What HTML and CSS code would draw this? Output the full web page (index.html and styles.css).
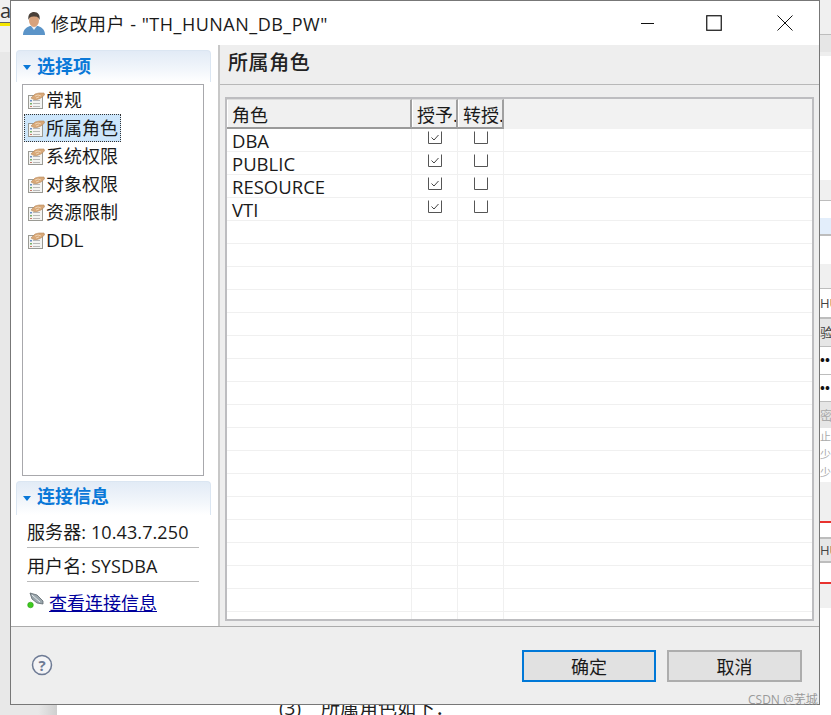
FILE: index.html
```html
<!DOCTYPE html>
<html lang="zh-CN">
<head>
<meta charset="utf-8">
<title>修改用户</title>
<link rel="stylesheet" href="styles.css">
</head>
<body>
<svg class="defs" width="0" height="0" aria-hidden="true">
  <symbol id="page" viewBox="0 0 17 17">
    <rect x="0.5" y="3.5" width="14" height="13" fill="#f4f4f2" stroke="#9a9a94"/>
    <rect x="2" y="8" width="2" height="1.5" fill="#6c8fc4"/><rect x="5" y="8" width="7" height="1" fill="#b8b8b8"/>
    <rect x="2" y="11" width="2" height="1.5" fill="#7ab06a"/><rect x="5" y="11" width="7" height="1" fill="#b8b8b8"/>
    <rect x="2" y="14" width="2" height="1" fill="#c47a6c"/><rect x="5" y="14" width="7" height="1" fill="#b8b8b8"/>
    <path d="M3 6 L7 2 L11 1 L16 1 L16.500 3 L13 6 L9 7.500 L6 7.500 Z" fill="#d8a878" stroke="#b98a5c" stroke-width=".6"/>
    <path d="M7 4 L10 3 L13 4 M8 6 L11 5" fill="none" stroke="#f4dcc0" stroke-width=".8"/>
  </symbol>
  <symbol id="chk" viewBox="0 0 14 13">
    <path d="M.5 .5V12.500H13.500V.5" fill="#fff" stroke="#555" stroke-width="1"/>
    <path d="M3.500 6.500L6 9L10.500 4" fill="none" stroke="#444" stroke-width="1"/>
  </symbol>
  <symbol id="unchk" viewBox="0 0 14 13">
    <path d="M.5 .5V12.500H13.500V.5" fill="#fff" stroke="#555" stroke-width="1"/>
  </symbol>
</svg>

<div class="desk">
  <div class="desk-left">
    <div class="desk-left-top"><span class="desk-a">a</span><span class="desk-mark"></span></div>
  </div>
  <div class="desk-right">
    <div class="s s34 grey"></div>
    <div class="s s1 rule"></div>
    <div class="s s17 darker"></div>
    <div class="s s4 pale"></div>
    <div class="s s124"></div>
    <div class="s s20 grey"></div>
    <div class="s s1 rule"></div>
    <div class="s s17"></div>
    <div class="s s16 blue"></div>
    <div class="s s2 rule"></div>
    <div class="s s28"></div>
    <div class="s s24 grey"></div>
    <div class="s s1 rule"></div>
    <div class="s s28 txt">HU</div>
    <div class="s s2 rule"></div>
    <div class="s s27 txt darker">验</div>
    <div class="s s1 rule"></div>
    <div class="s s27 txt bold">••</div>
    <div class="s s1 rule"></div>
    <div class="s s26 txt bold">••</div>
    <div class="s s1 rule"></div>
    <div class="s s26 txt darker faint">密</div>
    <div class="s s18 txt faint small">止</div>
    <div class="s s18 txt faint small">少</div>
    <div class="s s18 txt faint small">少</div>
    <div class="s s39 grey"></div>
    <div class="s s2 red"></div>
    <div class="s s14"></div>
    <div class="s s2 rule"></div>
    <div class="s s22 txt darker">HU</div>
    <div class="s s2 rule"></div>
    <div class="s s19"></div>
    <div class="s s2 red"></div>
    <div class="s s24 grey"></div>
  </div>
  <div class="desk-shade"></div>
  <p class="desk-text">(3)<span class="desk-gap"></span>所属角色如下：</p>
</div>

<div class="window">
  <header class="titlebar">
    <svg class="user-icon" width="24" height="24" viewBox="0 0 24 24" aria-hidden="true">
      <path d="M1 24 C1 18 5 16 8 15 L16 15 C19 16 23 18 23 24 Z" fill="#5b94c8"/>
      <path d="M9 15 L12 19 L15 15 Z" fill="#e8eef4"/>
      <ellipse cx="12" cy="9.500" rx="5" ry="6.500" fill="#d8a27c"/>
      <path d="M6.500 9 C5.500 3 9 1 12 1 C16 1 18.500 4 17.500 9 C16.500 6 15 5.500 12 5.500 C9 5.500 7.500 6 6.500 9 Z" fill="#4a4038"/>
    </svg>
    <h1 class="title">修改用户 - "TH_HUNAN_DB_PW"</h1>
    <div class="controls">
      <svg class="ctl ctl-min" width="14" height="16" viewBox="0 0 14 16" aria-hidden="true"><path d="M1 8.500H14" stroke="#111" stroke-width="1"/></svg>
      <svg class="ctl ctl-max" width="16" height="16" viewBox="0 0 16 16" aria-hidden="true"><rect x=".75" y=".75" width="14.500" height="14.500" fill="none" stroke="#111" stroke-width="1.200"/></svg>
      <svg class="ctl ctl-close" width="16" height="16" viewBox="0 0 16 16" aria-hidden="true"><path d="M.5 .5L15.500 15.500M15.500 .5L.5 15.500" stroke="#111" stroke-width="1"/></svg>
    </div>
  </header>

  <main class="main">
    <aside class="side">
      <div class="section-head"><span class="tri"></span>选择项</div>
      <ul class="nav">
        <li class="nav-item"><svg class="nav-icon"><use href="#page"/></svg><span class="nav-label">常规</span></li>
        <li class="nav-item on"><svg class="nav-icon"><use href="#page"/></svg><span class="nav-label">所属角色</span></li>
        <li class="nav-item"><svg class="nav-icon"><use href="#page"/></svg><span class="nav-label">系统权限</span></li>
        <li class="nav-item"><svg class="nav-icon"><use href="#page"/></svg><span class="nav-label">对象权限</span></li>
        <li class="nav-item"><svg class="nav-icon"><use href="#page"/></svg><span class="nav-label">资源限制</span></li>
        <li class="nav-item"><svg class="nav-icon"><use href="#page"/></svg><span class="nav-label latin">DDL</span></li>
      </ul>
      <div class="section-head second"><span class="tri"></span>连接信息</div>
      <div class="info">
        <div class="info-row">服务器: 10.43.7.250</div>
        <div class="info-row">用户名: SYSDBA</div>
        <div class="info-link">
          <svg width="20" height="20" viewBox="0 0 20 20" aria-hidden="true">
            <path d="M3 1 L10 3 L16 9 L16 12 L10 11 L5 7 Z" fill="#9aa6ac" stroke="#5e686e" stroke-width=".8"/>
            <path d="M5 3 L13 10" stroke="#e6ecef" stroke-width="1"/>
            <circle cx="3.500" cy="13" r="2.800" fill="#3ecb1e" stroke="#2a9a14" stroke-width=".6"/>
          </svg>
          <a class="link" href="#">查看连接信息</a>
        </div>
      </div>
    </aside>

    <section class="pane">
      <h2 class="pane-title">所属角色</h2>
      <div class="pane-body">
        <div class="grid">
          <div class="grid-head">
            <div class="hcell c1">角色</div>
            <div class="hcell c2">授予.</div>
            <div class="hcell c3">转授.</div>
          </div>
          <div class="grid-rows">
            <div class="row"><div class="cell c1">DBA</div><div class="cell c2"><svg class="box"><use href="#chk"/></svg></div><div class="cell c3"><svg class="box"><use href="#unchk"/></svg></div></div>
            <div class="row"><div class="cell c1">PUBLIC</div><div class="cell c2"><svg class="box"><use href="#chk"/></svg></div><div class="cell c3"><svg class="box"><use href="#unchk"/></svg></div></div>
            <div class="row"><div class="cell c1">RESOURCE</div><div class="cell c2"><svg class="box"><use href="#chk"/></svg></div><div class="cell c3"><svg class="box"><use href="#unchk"/></svg></div></div>
            <div class="row"><div class="cell c1">VTI</div><div class="cell c2"><svg class="box"><use href="#chk"/></svg></div><div class="cell c3"><svg class="box"><use href="#unchk"/></svg></div></div>
            <div class="row"><div class="cell c1"></div><div class="cell c2"></div><div class="cell c3"></div></div>
            <div class="row"><div class="cell c1"></div><div class="cell c2"></div><div class="cell c3"></div></div>
            <div class="row"><div class="cell c1"></div><div class="cell c2"></div><div class="cell c3"></div></div>
            <div class="row"><div class="cell c1"></div><div class="cell c2"></div><div class="cell c3"></div></div>
            <div class="row"><div class="cell c1"></div><div class="cell c2"></div><div class="cell c3"></div></div>
            <div class="row"><div class="cell c1"></div><div class="cell c2"></div><div class="cell c3"></div></div>
            <div class="row"><div class="cell c1"></div><div class="cell c2"></div><div class="cell c3"></div></div>
            <div class="row"><div class="cell c1"></div><div class="cell c2"></div><div class="cell c3"></div></div>
            <div class="row"><div class="cell c1"></div><div class="cell c2"></div><div class="cell c3"></div></div>
            <div class="row"><div class="cell c1"></div><div class="cell c2"></div><div class="cell c3"></div></div>
            <div class="row"><div class="cell c1"></div><div class="cell c2"></div><div class="cell c3"></div></div>
            <div class="row"><div class="cell c1"></div><div class="cell c2"></div><div class="cell c3"></div></div>
            <div class="row"><div class="cell c1"></div><div class="cell c2"></div><div class="cell c3"></div></div>
            <div class="row"><div class="cell c1"></div><div class="cell c2"></div><div class="cell c3"></div></div>
            <div class="row"><div class="cell c1"></div><div class="cell c2"></div><div class="cell c3"></div></div>
            <div class="row"><div class="cell c1"></div><div class="cell c2"></div><div class="cell c3"></div></div>
            <div class="row"><div class="cell c1"></div><div class="cell c2"></div><div class="cell c3"></div></div>
            <div class="row"><div class="cell c1"></div><div class="cell c2"></div><div class="cell c3"></div></div>
          </div>
        </div>
      </div>
    </section>
  </main>

  <footer class="footer">
    <svg class="help" width="22" height="22" viewBox="0 0 22 22" aria-hidden="true">
      <circle cx="11" cy="11" r="9.500" fill="#f4f4f6" stroke="#6d7a94" stroke-width="1.500"/>
      <text x="11" y="16.500" text-anchor="middle" class="help-q">?</text>
    </svg>
    <div class="buttons">
      <button class="btn primary">确定</button>
      <button class="btn">取消</button>
    </div>
  </footer>
</div>
<div class="watermark">CSDN @芜城</div>
</body>
</html>
```
FILE: styles.css
```css
* { box-sizing: border-box; }
html, body { margin: 0; padding: 0; }
body {
  position: relative;
  width: 831px;
  height: 715px;
  overflow: hidden;
  background: #fff;
  font-family: "Open Sans", "Noto Sans CJK SC", sans-serif;
  font-size: 18px;
  color: #1a1a1a;
}
.defs { position: absolute; }

/* Desktop behind the dialog */
.desk { position: absolute; inset: 0; }
.desk-left { position: absolute; left: 0; top: 0; width: 10px; height: 715px; background: #e8e8e8; }
.desk-left-top { height: 52px; background: #f0f0f0; display: flex; flex-direction: column; overflow: hidden; }
.desk-a { font: 20px/22px "Open Sans", sans-serif; height: 22px; color: #333; }
.desk-mark { height: 4px; background: #f5e600; border-top: 1px solid #666; }
.desk-right { position: absolute; left: 820px; top: 0; width: 11px; height: 715px; display: flex; flex-direction: column; overflow: hidden; }
.desk-shade { position: absolute; left: 10px; top: 700px; width: 47px; height: 15px; background: linear-gradient(90deg, #e8e8e8 60%, #cfcfcf); }
.desk-text { position: absolute; left: 279px; top: 696px; margin: 0; font-size: 19px; line-height: 24px; color: #222; white-space: nowrap; display: flex; }
.desk-gap { width: 20px; flex: none; }

.s { flex: none; overflow: hidden; white-space: nowrap; font-size: 13px; color: #444; line-height: 1.4; }
.s1 { height: 1px; } .s2 { height: 2px; } .s4 { height: 4px; } .s14 { height: 14px; } .s16 { height: 16px; } .s17 { height: 17px; } .s18 { height: 18px; } .s19 { height: 19px; }
.s20 { height: 20px; } .s22 { height: 22px; } .s24 { height: 24px; } .s26 { height: 26px; } .s27 { height: 27px; } .s28 { height: 28px; } .s34 { height: 34px; } .s39 { height: 39px; } .s124 { height: 124px; }
.grey { background: #f0f0f0; }
.darker { background: #e6e6e6; }
.pale { background: #eeeeee; }
.blue { background: #e3eefb; }
.rule { background: #bdbdbd; }
.red { background: #e8322e; }
.txt { display: flex; align-items: center; }
.bold { color: #111; font-size: 13px; font-weight: 700; }
.faint { color: #aaa; }
.small { font-size: 11px; }

/* Dialog */
.window {
  position: absolute;
  left: 10px;
  top: 0;
  width: 810px;
  height: 705px;
  border: 1px solid #777;
  background: #fff;
  display: flex;
  flex-direction: column;
}
.titlebar { height: 44px; flex: none; display: flex; align-items: center; padding-left: 11px; background: #fff; }
.user-icon { flex: none; margin-right: 5px; }
.title { margin: 0; font-size: 18px; font-weight: 400; letter-spacing: .5px; color: #1a1a1a; white-space: nowrap; }
.controls { margin-left: auto; display: flex; align-items: center; padding-right: 26px; }
.ctl { display: block; }
.ctl-min { margin-right: 52px; }
.ctl-max { margin-right: 55px; }

.main { height: 581px; flex: none; display: flex; background: #eee; }
.side { width: 207px; flex: none; background: #fff; padding: 5px 7px 0 5px; display: flex; flex-direction: column; }
.section-head {
  height: 32px;
  flex: none;
  display: flex;
  align-items: center;
  padding: 0 0 4px 20px;
  position: relative;
  font-size: 18px;
  font-weight: 700;
  color: #0a78d8;
  border: 1px solid #dbe6f2;
  border-bottom: 0;
  border-radius: 4px 4px 0 0;
  background: linear-gradient(180deg, #e2ebf6 0%, #f2f6fb 60%, #fff 100%);
}
.second { height: 34px; margin-top: 5px; padding-bottom: 7px; }
.tri { position: absolute; left: 6px; top: 14px; border: 4px solid transparent; border-top: 5px solid #0a78d8; border-bottom: 0; }
.nav {
  list-style: none;
  margin: 2px 7px 0 6px;
  padding: 1px 1px 3px;
  height: 392px;
  flex: none;
  border: 1.500px solid #a8a8ac;
  background: #fff;
}
.nav-item { height: 28px; display: flex; align-items: center; padding-left: 4px; }
.nav-icon { width: 17px; height: 17px; flex: none; margin-right: 1px; }
.nav-label { padding: 0; line-height: 28px; white-space: nowrap; }
.latin { font-size: 19px; }
.nav-item.on { width: 97px; background: #cde6fb; outline: 1px dotted #333; outline-offset: -1px; }
.info { padding: 0 12px 0 11px; margin-top: -1px; }
.info-row { height: 34px; display: flex; align-items: center; border-bottom: 1.500px solid #bbb; white-space: nowrap; letter-spacing: .1px; }
.info-link { display: flex; align-items: center; height: 39px; }
.link { color: #00009c; margin-left: 2px; text-decoration: underline; letter-spacing: 0; }

.pane { flex: 1; min-width: 0; border-left: 2px solid #c8c8c8; display: flex; flex-direction: column; }
.pane-title { margin: 0; height: 40px; flex: none; padding: 0 0 6px 8px; display: flex; align-items: center; font-size: 20px; font-weight: 500; letter-spacing: .6px; color: #222; border-bottom: 1.500px solid #b8b8b8; }
.pane-body { flex: 1; min-height: 0; padding: 12px 5px 5px 5px; }
.grid { height: 100%; border: 2px solid #bdbdc0; background: #fff; overflow: hidden; display: flex; flex-direction: column; }
.grid-head { height: 30px; flex: none; display: flex; background: #f2f2f2; }
.hcell { height: 30px; background: #f0f0f0; border-right: 2px solid #a0a0a0; border-bottom: 2px solid #9a9a9a; border-top: 1px solid #ddd; display: flex; align-items: center; padding-left: 5px; overflow: hidden; white-space: nowrap; box-shadow: inset 1px 0 0 #fff; }
.grid-rows { flex: 1; min-height: 0; overflow: hidden; }
.row { height: 23px; display: flex; border-bottom: 1px solid #f0f0f0; }
.cell { height: 22px; border-right: 1px solid #f0f0f0; line-height: 23px; white-space: nowrap; font-size: 18.500px; }
.c1 { width: 185px; padding-left: 5px; }
.hcell.c1 { padding-left: 5px; }
.c2, .c3 { width: 46px; }
.cell.c2, .cell.c3 { display: flex; justify-content: center; padding-top: 2px; }
.box { width: 14px; height: 13px; display: block; }

.footer { flex: 1; min-height: 0; position: relative; display: flex; align-items: flex-start; justify-content: space-between; padding: 23px 17px 0 20px; background: #eee; border-top: 1.500px solid #ababab; }
.help { margin-top: 4px; }
.help-q { font: 700 15px "Open Sans", sans-serif; fill: #6d7a94; }
.buttons { display: flex; gap: 11px; }
.btn { width: 135px; height: 32px; padding: 0; font: inherit; color: #1a1a1a; background: #e1e1e1; border: 2px solid #adadad; }
.btn.primary { width: 134px; border-color: #0078d7; }
.watermark { position: absolute; left: 748px; top: 692px; font-size: 12px; line-height: 15px; color: #9a9a9a; white-space: nowrap; }
```
